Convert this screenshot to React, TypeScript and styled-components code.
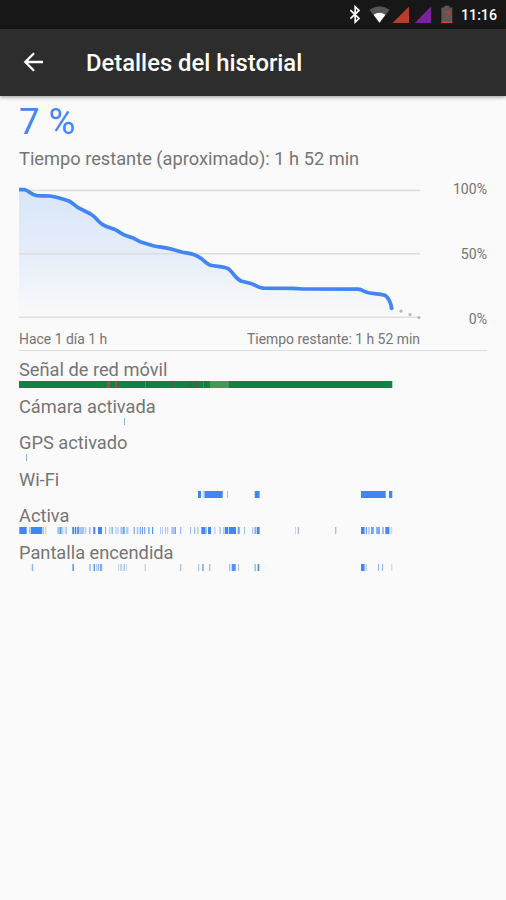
import React from "react";
import styled, { createGlobalStyle } from "styled-components";

const GlobalStyle = createGlobalStyle`
  * { box-sizing: border-box; }
  body { margin: 0; background: #fafafa; font-family: Roboto, "Noto Sans", sans-serif; }
`;

const Screen = styled.div`
  width: 506px;
  height: 900px;
  display: flex;
  flex-direction: column;
  background: #fafafa;
  color: #757575;
  overflow: hidden;
`;

const StatusBar = styled.div`
  height: 29px;
  flex: none;
  display: flex;
  justify-content: flex-end;
  padding-right: 9px;
  background: #171717;
`;

const StatusIcons = styled.svg`
  width: 116px;
  height: 29px;
  display: block;
`;

const Clock = styled.span`
  width: 36px;
  margin-left: 6px;
  color: #fff;
  font-size: 14.2px;
  font-weight: 500;
  line-height: 31px;
  white-space: nowrap;
`;

const AppBar = styled.header`
  height: 67px;
  flex: none;
  display: flex;
  align-items: center;
  padding-left: 23px;
  gap: 42px;
  background: #2d2d2d;
  box-shadow: 0 1px 4px rgba(0, 0, 0, 0.4);
`;

const BackIcon = styled.svg`
  width: 21px;
  height: 20px;
  display: block;
  margin-top: -2px;
`;

const Title = styled.h1`
  margin: 0;
  color: #fff;
  font-size: 23.8px;
  font-weight: 500;
  line-height: 28px;
`;

const Content = styled.main`
  display: flex;
  flex-direction: column;
  padding: 0 19px;
`;

const Percent = styled.div`
  height: 50px;
  color: #4285f4;
  font-size: 36.5px;
  line-height: 52px;
`;

const Remaining = styled.div`
  height: 24px;
  font-size: 18.24px;
  line-height: 25px;
`;

const ChartRow = styled.div`
  display: flex;
  justify-content: space-between;
  height: 157px;
  padding-top: 10px;
`;

const Chart = styled.svg`
  width: 402px;
  height: 146px;
  display: block;
  overflow: visible;
`;

const Scale = styled.div`
  height: 147px;
  padding-top: 2px;
  margin-bottom: -2px;
  display: flex;
  flex-direction: column;
  justify-content: space-between;
  align-items: flex-end;
  font-size: 14.1px;
  line-height: 15px;
`;

const TimeAxis = styled.div`
  display: flex;
  justify-content: space-between;
  width: 401px;
  height: 23px;
  font-size: 13.93px;
  line-height: 25px;
  white-space: nowrap;
`;

const Divider = styled.div`
  height: 1px;
  background: #dedede;
`;

const Timelines = styled.section`
  display: flex;
  flex-direction: column;
  padding-top: 6px;
`;

const Timeline = styled.div`
  height: 36.6px;
`;

const TimelineLabel = styled.div`
  height: 24px;
  font-size: 18.24px;
  line-height: 26px;
`;

const Track = styled.svg`
  width: 402px;
  height: 7px;
  display: block;
`;

type Segment = [start: number, end: number, opacity?: number, color?: string];

const GREEN = "#0f8243";
const RED = "#b34a35";

const timelines: { label: string; segments: Segment[] }[] = [
  {
    label: "Señal de red móvil",
    segments: [
      [19, 392.3, 1, GREEN],
      [107.3, 110, 1, RED], [115.5, 117, 1, RED],
      [145, 146, 0.4, "#7eaa55"], [172, 173, 0.7, "#75443f"],
      [189.5, 190.5, 0.6, "#75443f"], [196, 197, 0.7, "#75443f"],
      [203, 204, 0.4, "#7eaa55"], [210, 229, 1, "#439a57"],
    ],
  },
  { label: "Cámara activada", segments: [[124, 125, 0.6]] },
  { label: "GPS activado", segments: [[26, 27, 0.6]] },
  {
    label: "Wi-Fi",
    segments: [
      [198, 201], [202.5, 204.5, 0.3], [204.5, 222.7], [227, 228, 0.5],
      [254.7, 259.6], [361, 385.7], [389, 392.3],
    ],
  },
  {
    label: "Activa",
    segments: [
      [19.3, 26.7], [29, 30, 0.5], [30.7, 42.3], [43, 44, 0.5], [45.3, 46.2, 0.5],
      [57.3, 62.7, 0.5], [60, 61, 0.7], [63.5, 64.3, 0.3], [65.3, 67, 0.4],
      [72.3, 74.3], [75, 76.3], [77, 79.3, 0.8], [79.7, 84.3, 0.45], [85, 86.5, 0.3],
      [89, 90.5, 0.5], [93.3, 95.3], [98, 102], [105, 106.2, 0.6], [109.3, 110.3, 0.5],
      [111.5, 113, 0.6], [115.5, 116.5, 0.5], [117.5, 118.5, 0.5], [120.5, 122, 0.5],
      [122.5, 124.8, 0.75], [126, 128.5, 0.4], [133.5, 135, 0.6], [136.8, 138, 0.5],
      [138.5, 139.5, 0.3], [140, 141, 0.7], [142, 142.9, 0.9], [144, 145.3, 0.65],
      [148.2, 149.6, 0.7], [152, 153.2, 0.9], [160.2, 161, 0.5], [162, 162.8, 0.5],
      [165, 166, 0.5], [167.2, 168.2, 0.5], [171.3, 175.8, 0.45], [175, 176, 0.6],
      [180.2, 181.2, 0.6], [190.2, 191.1, 0.6], [194, 195.2, 0.5], [197.3, 198.5, 0.5],
      [201.3, 205], [205, 207, 0.5], [208, 211], [214.3, 215.3, 0.5],
      [219.4, 221, 0.4], [223.3, 224.5, 0.6], [225, 228], [228.7, 231], [231, 236],
      [237.7, 239.7, 0.8], [244, 245, 0.5], [252.2, 253.2, 0.5],
      [254.5, 256.5, 0.65], [257, 259.6], [295, 296, 0.3], [297.7, 299, 0.5],
      [335, 336.3, 0.5], [361, 364.6], [365.8, 367, 0.8], [368, 370, 0.35],
      [371, 373.8, 0.75], [376.2, 380, 0.7], [382, 384, 0.5], [385, 386, 0.65],
      [386, 389.2], [389.6, 390.3, 0.5], [391.2, 392.2, 0.35],
    ],
  },
  {
    label: "Pantalla encendida",
    segments: [
      [30.5, 31.5, 0.2], [32, 33.2, 0.6], [72.4, 74, 0.85], [89.3, 90.7, 0.6],
      [93.5, 95, 0.85], [96, 97, 0.4], [97.8, 99.2, 0.6], [100, 102.2, 0.65],
      [118.3, 119.2, 0.4], [120.5, 121.8, 0.5], [123.6, 124.7, 0.6], [126, 127, 0.3],
      [144.6, 145.8, 0.35], [180.2, 181.2, 0.6], [198.2, 199.2, 0.5],
      [202, 204, 0.55], [209, 210.3, 0.5], [229.2, 230.2, 0.6], [231.7, 235.7, 0.9],
      [238, 239, 0.5], [254.3, 256, 0.5], [257.5, 259.3, 0.9],
      [361, 364.6], [365.6, 367, 0.35], [378, 379, 0.6], [382, 383, 0.6], [391.3, 392.3, 0.35],
    ],
  },
];

const curve =
  "M0 9.7H6C10 10.5 12 15 17.7 15.7C23 16 27 15.6 31 16C38 17 45 19.3 50 21C54 23 56 25.7 58.7 27.3L71.7 34C77 37 80 43 85 45.3C89 47.5 93 47.8 97 50C101 52 102 54 106 55.3L113.3 57.7L121 61.7L134.3 65.7C140 67 146 67.5 152 69L162.7 72C167 73 172 73.5 176 75C179 76.2 181 77.5 183.3 79.3C186 81.7 188.5 84.3 191.7 85.2C197 86.5 206 86.7 209.3 88.7C211.5 90.2 212.5 92 214.3 94C217 97.5 219 99.8 222.7 101.3L231 103.3C236 104.7 239 107.5 244.3 108.2L274.3 108.4L284 109L339.3 109.2C343 109.5 345 111.8 349.3 112.7C355 114 362 113.8 366 115.3C369 116.8 372.5 124 372.6 128.8";

function App() {
  return (
    <>
      <GlobalStyle />
      <Screen>
        <StatusBar>
          <StatusIcons viewBox="-16 0 116 29">
            <path d="M-4.6 10.2L4 18.4L0.2 22V6.8L4 10.4L-4.6 18.6" fill="none" stroke="#fff" strokeWidth="1.7" />
            <path d="M14.3 9.8Q24.5 2.7 34.7 9.8L24.5 22.7Z" fill="#555" />
            <path d="M18.6 14.8Q24.5 10.6 30.4 14.8L24.5 22.7Z" fill="#fff" />
            <path d="M37.5 23L54 6.5V23Z" fill="#b83d2b" />
            <path d="M59.7 23L76 6.5V23Z" fill="#7a219e" />
            <path d="M86.3 7.5h3V5.8h5v1.7h3v15.6h-11z" fill="#595959" />
            <path d="M89.3 11.7h4.8L91.8 18" fill="none" stroke="#c03c2c" strokeWidth="1.4" />
            <path d="M86.3 21.5h11v1.6h-11z" fill="#d4452d" />
          </StatusIcons>
          <Clock>11:16</Clock>
        </StatusBar>
        <AppBar>
          <BackIcon viewBox="0 0 21 20">
            <path d="M20 10H2.5M11 1.3L2.3 10L11 18.7" fill="none" stroke="#fff" strokeWidth="2.3" />
          </BackIcon>
          <Title>Detalles del historial</Title>
        </AppBar>
        <Content>
          <Percent>7 %</Percent>
          <Remaining>Tiempo restante (aproximado): 1 h 52 min</Remaining>
          <ChartRow>
            <Chart viewBox="0 0 402 146">
              <defs>
                <linearGradient id="fill" x1="0" y1="10" x2="0" y2="137" gradientUnits="userSpaceOnUse">
                  <stop offset="0" stopColor="#d8e6f8" />
                  <stop offset="0.5" stopColor="#e6edf9" />
                  <stop offset="1" stopColor="#fafafa" />
                </linearGradient>
              </defs>
              <path d={`${curve} V137 H0 Z`} fill="url(#fill)" />
              <path d="M0 10.5H401M0 73.7H401M0 137.2H401" stroke="#dedede" strokeWidth="1.4" />
              <path d={curve} fill="none" stroke="#4285f4" strokeWidth="3.7" strokeLinejoin="round" />
              <circle cx="372.6" cy="128.3" r="1.85" fill="#4285f4" />
              <g fill="#b8b8b8">
                <circle cx="382" cy="131.2" r="1.6" />
                <circle cx="391" cy="134.5" r="1.6" />
                <circle cx="400" cy="137.5" r="1.6" />
              </g>
            </Chart>
            <Scale>
              <span>100%</span>
              <span>50%</span>
              <span>0%</span>
            </Scale>
          </ChartRow>
          <TimeAxis>
            <span>Hace 1 día 1 h</span>
            <span>Tiempo restante: 1 h 52 min</span>
          </TimeAxis>
          <Divider />
          <Timelines>
            {timelines.map(({ label, segments }) => (
              <Timeline key={label}>
                <TimelineLabel>{label}</TimelineLabel>
                <Track viewBox="19 0 402 7">
                  {segments.map(([start, end, opacity = 1, color = "#4285f4"]) => (
                    <rect key={start} x={start} y="0" width={end - start} height="7" fill={color} opacity={opacity} />
                  ))}
                </Track>
              </Timeline>
            ))}
          </Timelines>
        </Content>
      </Screen>
    </>
  );
}

export default App;
